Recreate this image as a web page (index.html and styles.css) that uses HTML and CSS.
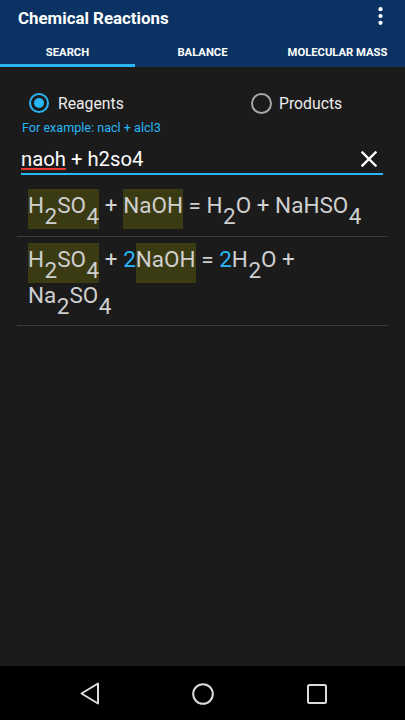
FILE: index.html
```html
<!DOCTYPE html>
<html>
<head>
<meta charset="utf-8">
<link rel="stylesheet" href="styles.css">
</head>
<body>
<div class="screen">
  <header class="appbar">
    <div class="toolbar">
      <div class="title">Chemical Reactions</div>
      <svg class="overflow" width="5" height="18" viewBox="0 0 5 18"><circle cx="2.5" cy="2.2" r="2.1" fill="#fff"/><circle cx="2.5" cy="9" r="2.1" fill="#fff"/><circle cx="2.5" cy="15.8" r="2.1" fill="#fff"/></svg>
    </div>
    <nav class="tabs">
      <div class="tab active">SEARCH</div>
      <div class="tab">BALANCE</div>
      <div class="tab">MOLECULAR MASS</div>
    </nav>
  </header>

  <main class="content">
    <div class="radios">
      <div class="radio">
        <svg width="20" height="20" viewBox="0 0 20 20"><circle cx="10" cy="10" r="9" fill="none" stroke="#29b6f6" stroke-width="2"/><circle cx="10" cy="10" r="5" fill="#29b6f6"/></svg>
        <span>Reagents</span>
      </div>
      <div class="radio">
        <svg width="21" height="21" viewBox="0 0 21 21"><circle cx="10.5" cy="10.5" r="9.5" fill="none" stroke="#a8a8a8" stroke-width="2"/></svg>
        <span>Products</span>
      </div>
    </div>
    <div class="hint">For example: nacl + alcl3</div>
    <div class="input">
      <div class="input-text"><span class="misspelled">naoh</span> + h2so4</div>
      <svg class="clear" width="16" height="16" viewBox="0 0 16 16"><path d="M1.5 1.5L14.5 14.5M14.5 1.5L1.5 14.5" stroke="#fff" stroke-width="2.4" stroke-linecap="square"/></svg>
    </div>

    <div class="results">
      <div class="result">
        <div class="line"><span class="hl">H<sub>2</sub>SO<sub>4</sub></span> + <span class="hl">NaOH</span> = H<sub>2</sub>O + NaHSO<sub>4</sub></div>
      </div>
      <div class="result">
        <div class="line"><span class="hl">H<sub>2</sub>SO<sub>4</sub></span> + <span class="coef">2</span><span class="hl">NaOH</span> = <span class="coef">2</span>H<sub>2</sub>O +</div>
        <div class="line cont">Na<sub>2</sub>SO<sub>4</sub></div>
      </div>
    </div>
  </main>

  <footer class="navbar">
    <svg width="20" height="23" viewBox="0 0 20 23"><path d="M18 1.5L18 21.5L1.5 11.5Z" fill="none" stroke="#dcdcdc" stroke-width="2" stroke-linejoin="round"/></svg>
    <svg width="22" height="22" viewBox="0 0 22 22"><circle cx="11" cy="11" r="9.8" fill="none" stroke="#dcdcdc" stroke-width="2"/></svg>
    <svg width="20" height="20" viewBox="0 0 20 20"><rect x="1" y="1" width="18" height="18" rx="1.5" fill="none" stroke="#dcdcdc" stroke-width="2"/></svg>
  </footer>
</div>
</body>
</html>
```

FILE: styles.css
```css
* { box-sizing: border-box; }
html, body { margin: 0; padding: 0; }
body {
  width: 405px;
  height: 720px;
  overflow: hidden;
  background: #1b1b1b;
  font-family: Roboto, "Liberation Sans", sans-serif;
}
.screen {
  display: flex;
  flex-direction: column;
  height: 720px;
}
.appbar {
  background: #0a3363;
  color: #fff;
  height: 67px;
  flex: none;
}
.toolbar {
  height: 36px;
  display: flex;
  align-items: flex-start;
  justify-content: space-between;
  padding: 0 22px 0 18px;
}
.title {
  font-size: 16.875px;
  font-weight: 700;
  line-height: 36px;
}
.overflow { margin-top: 7px; }
.tabs {
  height: 31px;
  display: grid;
  grid-template-columns: 1fr 1fr 1fr;
}
.tab {
  display: flex;
  align-items: center;
  justify-content: center;
  font-size: 11.25px;
  font-weight: 700;
  padding-top: 1px;
}
.tab.active { box-shadow: inset 0 -3px 0 #29b6f6; }

.content {
  flex: 1;
  background: #1b1b1b;
}
.radios {
  margin-top: 25px;
  height: 22px;
  padding-left: 29px;
  display: grid;
  grid-template-columns: 222px auto;
  align-items: center;
}
.radio {
  display: flex;
  align-items: center;
  gap: 9px;
  color: #ececec;
  font-size: 15.75px;
}
.radio svg { display: block; }
.radio:last-child { gap: 7px; }
.hint {
  margin-top: 6px;
  padding-left: 22px;
  font-size: 12.6px;
  line-height: 16px;
  color: #29b6f6;
}
.input {
  margin: 11px 22px 0 21px;
  display: flex;
  align-items: center;
  justify-content: space-between;
  padding-bottom: 2px;
  border-bottom: 2px solid #29b6f6;
}
.input-text {
  font-size: 20.25px;
  line-height: 24px;
  color: #fff;
}
.misspelled {
  text-decoration: underline;
  text-decoration-color: #e53935;
  text-decoration-thickness: 2px;
  text-underline-offset: 2px;
  text-decoration-skip-ink: none;
}
.clear { margin-right: 6px; display: block; }

.results {
  margin: 8px 17px 0 17px;
}
.result {
  padding: 6px 0 7px 11px;
  border-bottom: 1px solid #3a3a3a;
}
.line {
  font-size: 22.5px;
  line-height: 33px;
  color: #cfcfcf;
  white-space: nowrap;
}
.line.cont {
  line-height: 25px;
  padding-bottom: 10px;
}
.hl {
  display: inline-block;
  background: #3a3a13;
  line-height: 33px;
  padding-bottom: 7px;
}
sub {
  font-size: 1em;
  line-height: 0;
  vertical-align: -11px;
  margin-left: 0.5px;
}
.coef { color: #29b6f6; }

.navbar {
  height: 54px;
  flex: none;
  background: #000;
  display: flex;
  align-items: center;
  padding-top: 1px;
}
.navbar svg { display: block; }
.navbar svg:nth-child(1) { margin-left: 80px; }
.navbar svg:nth-child(2) { margin-left: 92px; }
.navbar svg:nth-child(3) { margin-left: 93px; }
```
